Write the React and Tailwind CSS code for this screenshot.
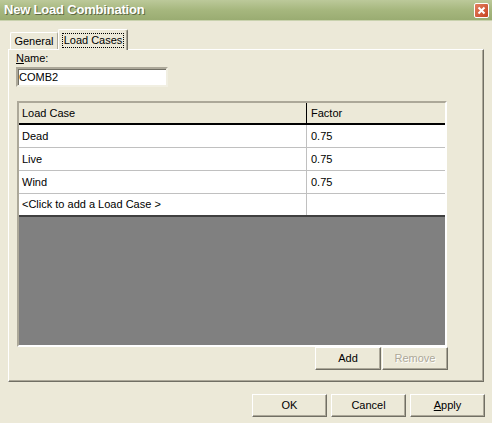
import React from "react";

const rows = [
  { name: "Dead", factor: "0.75" },
  { name: "Live", factor: "0.75" },
  { name: "Wind", factor: "0.75" },
];

const Btn = ({ children, disabled, className = "" }) => (
  <button
    className={`h-[23px] bg-[#ECE9D8] border border-t-white border-l-white border-r-[#716f64] border-b-[#716f64] shadow-[inset_-1px_-1px_0_#aca899] text-[11px] leading-none ${
      disabled ? "text-[#aca899] [text-shadow:1px_1px_0_#ffffff]" : "text-black"
    } ${className}`}
  >
    {children}
  </button>
);

export default function App() {
  return (
    <div className="w-[492px] h-[423px] bg-[#ECE9D8] overflow-hidden font-['Liberation_Sans',Arial,sans-serif] text-[11px] text-black">
      {/* title bar */}
      <div className="h-[21px] flex items-center justify-between bg-gradient-to-b from-[#bcc99a] via-[#a6b77e] to-[#9aac72] border-b border-[#c9d2ae]">
        <span className="pl-[4px] text-[13px] font-bold tracking-[-0.2px] text-white [text-shadow:1px_1px_0_#5f6a45]">
          New Load Combination
        </span>
        <div className="mr-[3px] w-[15px] h-[15px] rounded-[2px] border border-white bg-gradient-to-br from-[#e2805f] to-[#c6401d] flex items-center justify-center">
          <svg width="9" height="9" viewBox="0 0 9 9">
            <path d="M1.5 1.5 L7.5 7.5 M7.5 1.5 L1.5 7.5" stroke="white" strokeWidth="2" />
          </svg>
        </div>
      </div>

      {/* tabs */}
      <div className="ml-[8px] mt-[8px] h-[20px] flex items-end pl-[2px]">
        <div className="w-[48px] h-[17px] bg-[#ECE9D8] border border-b-0 border-t-white border-l-white border-r-[#aca899] rounded-t-[2px] flex items-center justify-center pt-[1px]">
          General
        </div>
        <div className="relative z-10 -mb-px w-[70px] h-[21px] bg-[#ECE9D8] border border-b-0 border-t-white border-l-white border-r-[#716f64] shadow-[inset_-1px_0_0_#aca899] rounded-t-[2px] flex items-center justify-center">
          <span className="px-[1px] leading-[13px] outline-1 outline-dotted outline-black">Load Cases</span>
        </div>
      </div>

      {/* panel */}
      <div className="ml-[8px] w-[476px] h-[333px] border border-t-white border-l-white border-r-[#716f64] border-b-[#716f64] shadow-[inset_-1px_-1px_0_#aca899] pl-[7px] pt-[2px]">
        <div className="leading-[13px]">
          <span className="underline">N</span>ame:
        </div>
        <div className="mt-[2px] w-[152px] h-[20px] bg-white border-2 border-t-[#aca899] border-l-[#aca899] border-r-[#f1efe2] border-b-[#f1efe2] shadow-[inset_1px_1px_0_#716f64] flex items-center pl-[1px]">
          COMB2
        </div>

        {/* grid */}
        <div className="mt-[14px] ml-[1px] w-[430px] h-[246px] border-2 border-t-[#aca899] border-l-[#aca899] border-r-white border-b-white bg-[#808080] flex flex-col">
          <div className="h-[22px] shrink-0 flex bg-[#ECE9D8] border-b-2 border-b-black">
            <div className="w-[288px] pl-[3px] flex items-center border-r border-black">Load Case</div>
            <div className="flex-1 pl-[4px] flex items-center">Factor</div>
          </div>
          {rows.map((r) => (
            <div key={r.name} className="h-[23px] shrink-0 flex bg-white border-b border-[#c0c0c0]">
              <div className="w-[288px] pl-[3px] flex items-center border-r border-[#c0c0c0]">{r.name}</div>
              <div className="flex-1 pl-[4px] flex items-center">{r.factor}</div>
            </div>
          ))}
          <div className="h-[23px] shrink-0 flex bg-white border-b-2 border-[#404040]">
            <div className="w-[288px] pl-[3px] flex items-center border-r border-[#c0c0c0]">&lt;Click to add a Load Case &gt;</div>
            <div className="flex-1"></div>
          </div>
        </div>

        <div className="w-[432px] flex justify-end gap-[1px]">
          <Btn className="w-[66px]">Add</Btn>
          <Btn className="w-[66px]" disabled>Remove</Btn>
        </div>
      </div>

      {/* dialog buttons */}
      <div className="mt-[12px] ml-[252px] flex gap-[4px]">
        <Btn className="w-[75px]">OK</Btn>
        <Btn className="w-[75px]">Cancel</Btn>
        <Btn className="w-[75px]">
          <span className="underline">A</span>pply
        </Btn>
      </div>
    </div>
  );
}
